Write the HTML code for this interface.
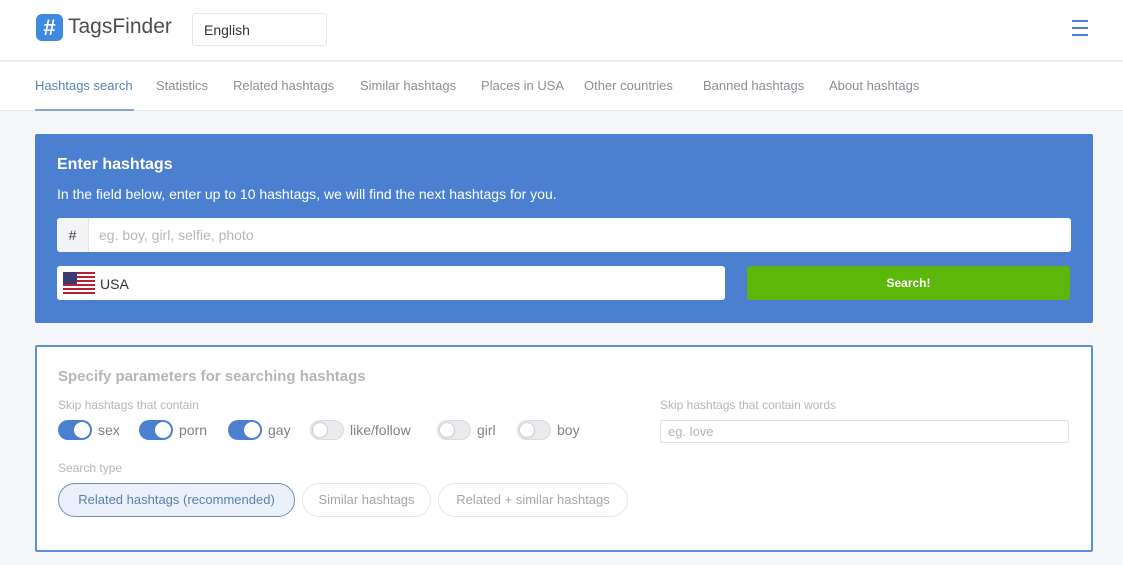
<!DOCTYPE html>
<html><head><meta charset="utf-8"><style>
*{box-sizing:border-box;margin:0;padding:0}
body{width:1123px;height:565px;overflow:hidden;background:#f5f7fa;font-family:"Liberation Sans",sans-serif;position:relative}
.abs{position:absolute;white-space:nowrap}
.hdr{left:0;top:0;width:1123px;height:61px;background:#fff;border-bottom:1px solid #e3e6ea}
.nav{left:0;top:62px;width:1123px;height:49px;background:#fff;border-bottom:1px solid #e3e6ea}
.nav span{position:absolute;top:16px;font-size:13px;color:#8a8f96}
.blue{left:35px;top:134px;width:1058px;height:189px;background:#4a80cf;border-radius:2px}
.w{color:#fff}
.inp{background:#fff;border-radius:3px}
.box{left:35px;top:345px;width:1058px;height:207px;background:#fff;border:2px solid #5b8fd6;border-radius:2px}
.g{color:#b3b6ba}
.tg{position:absolute;top:420px;width:34px;height:20px;border-radius:10px}
.tg.on{background:#4a80cf}
.tg.off{background:#e8eaed;border:1px solid #d8dbde}
.tg i{position:absolute;top:2px;width:16px;height:16px;border-radius:50%;background:#fff}
.tg.on i{right:2px}
.tg.off i{left:1px;top:1px;border:1px solid #ccc}
.tl{position:absolute;top:422px;font-size:14px;color:#7d8288}
.pill{position:absolute;top:483px;height:34px;border-radius:17px;border:1px solid #e4e6ea;font-size:13px;color:#a3a7ac;line-height:32px;text-align:center;white-space:nowrap}
</style></head><body>
<div class="abs hdr"></div>
<div class="abs" style="left:36px;top:14px;width:27px;height:27px;background:#3d8ae0;border-radius:6px;color:#fff;font-weight:bold;font-size:22px;text-align:center;line-height:27px">#</div>
<div class="abs" style="left:68px;top:15px;font-size:21px;color:#4a4d52">TagsFinder</div>
<div class="abs" style="left:192px;top:13px;width:135px;height:33px;border:1px solid #e3e6ea;border-radius:3px;font-size:14px;color:#333;padding:8px 11px">English</div>
<div class="abs" style="left:1072px;top:20px;width:16px;height:2px;background:#4a80cf;box-shadow:0 7px 0 #4a80cf,0 14px 0 #4a80cf"></div>
<div class="abs nav">
<span style="left:35px;color:#5a82b5">Hashtags search</span>
<span style="left:156px">Statistics</span>
<span style="left:233px">Related hashtags</span>
<span style="left:360px">Similar hashtags</span>
<span style="left:481px">Places in USA</span>
<span style="left:584px">Other countries</span>
<span style="left:703px">Banned hashtags</span>
<span style="left:829px">About hashtags</span>
<div style="position:absolute;left:35px;top:47px;width:99px;height:2px;background:#8aa6c8"></div>
</div>
<div class="abs blue"></div>
<div class="abs w" style="left:57px;top:156px;font-size:16px;font-weight:bold">Enter hashtags</div>
<div class="abs w" style="left:57px;top:186px;font-size:14px">In the field below, enter up to 10 hashtags, we will find the next hashtags for you.</div>
<div class="abs inp" style="left:57px;top:218px;width:1014px;height:34px"></div>
<div class="abs" style="left:57px;top:218px;width:32px;height:34px;background:#f3f4f6;border-right:1px solid #e0e2e5;font-size:14px;color:#444;text-align:center;line-height:34px;border-radius:3px 0 0 3px">#</div>
<div class="abs g" style="left:99px;top:227px;font-size:14px">eg. boy, girl, selfie, photo</div>
<div class="abs inp" style="left:57px;top:266px;width:668px;height:34px"></div>
<svg class="abs" style="left:63px;top:272px" width="32" height="22"><rect width="32" height="22" fill="#fff"/><g fill="#b22234"><rect y="0" width="32" height="2"/><rect y="4" width="32" height="2"/><rect y="8" width="32" height="2"/><rect y="12" width="32" height="2"/><rect y="16" width="32" height="2"/><rect y="20" width="32" height="2"/></g><rect width="14" height="12" fill="#3c3b6e"/></svg>
<div class="abs" style="left:100px;top:276px;font-size:14px;color:#333">USA</div>
<div class="abs" style="left:747px;top:266px;width:323px;height:34px;background:#5bb70a;border-radius:3px;color:#fff;font-size:12px;font-weight:bold;text-align:center;line-height:34px">Search!</div>
<div class="abs box"></div>
<div class="abs g" style="left:58px;top:368px;font-size:15px;font-weight:bold">Specify parameters for searching hashtags</div>
<div class="abs g" style="left:58px;top:398px;font-size:12px">Skip hashtags that contain</div>
<div class="tg on" style="left:58px"><i></i></div><span class="tl" style="left:98px">sex</span>
<div class="tg on" style="left:139px"><i></i></div><span class="tl" style="left:179px">porn</span>
<div class="tg on" style="left:228px"><i></i></div><span class="tl" style="left:268px">gay</span>
<div class="tg off" style="left:310px"><i></i></div><span class="tl" style="left:350px">like/follow</span>
<div class="tg off" style="left:437px"><i></i></div><span class="tl" style="left:477px">girl</span>
<div class="tg off" style="left:517px"><i></i></div><span class="tl" style="left:557px">boy</span>
<div class="abs g" style="left:660px;top:398px;font-size:12px">Skip hashtags that contain words</div>
<div class="abs" style="left:660px;top:420px;width:409px;height:23px;border:1px solid #e0e2e5;border-radius:2px;font-size:13px;color:#b3b6ba;padding:3px 7px">eg. love</div>
<div class="abs g" style="left:58px;top:461px;font-size:12px">Search type</div>
<div class="pill" style="left:58px;width:237px;background:#eaf1fb;border-color:#6a8fc0;color:#5a7fae">Related hashtags (recommended)</div>
<div class="pill" style="left:302px;width:129px">Similar hashtags</div>
<div class="pill" style="left:438px;width:190px">Related + similar hashtags</div>
</body></html>
